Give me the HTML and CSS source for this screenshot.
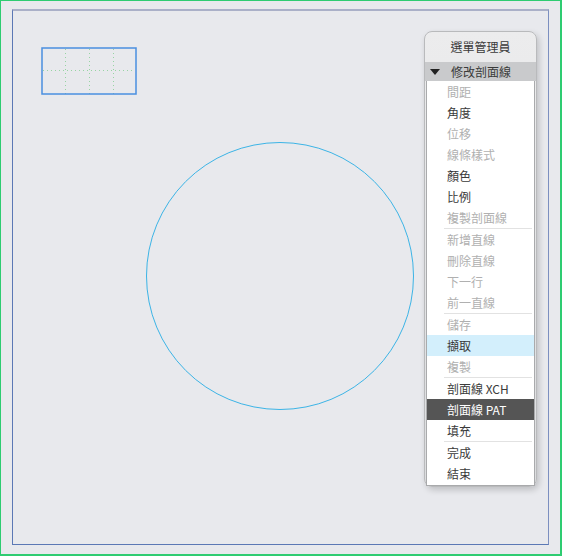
FILE: index.html
```html
<!DOCTYPE html>
<html>
<head>
<meta charset="utf-8">
<link rel="stylesheet" href="styles.css">
</head>
<body>
<div class="frame">
  <div class="canvas">
    <div class="grid-rect">
      <svg width="96" height="48" viewBox="0 0 96 48">
        <g stroke="#98d4a4" stroke-width="1" stroke-dasharray="1 3" fill="none">
          <line x1="24.5" y1="2" x2="24.5" y2="47"/>
          <line x1="48.5" y1="2" x2="48.5" y2="47"/>
          <line x1="72.5" y1="2" x2="72.5" y2="47"/>
          <line x1="2" y1="23.5" x2="94" y2="23.5"/>
        </g>
        <rect x="1" y="1" width="94" height="46" fill="none" stroke="#4a8fe0" stroke-width="1.5"/>
      </svg>
    </div>
    <div class="circle"></div>
    <div class="menu">
      <div class="menu-title">選單管理員</div>
      <div class="menu-head"><span class="tri"></span>修改剖面線</div>
      <ul class="menu-list">
        <li class="dis">間距</li>
        <li>角度</li>
        <li class="dis">位移</li>
        <li class="dis">線條樣式</li>
        <li>顏色</li>
        <li>比例</li>
        <li class="dis sep">複製剖面線</li>
        <li class="dis">新增直線</li>
        <li class="dis">刪除直線</li>
        <li class="dis">下一行</li>
        <li class="dis sep">前一直線</li>
        <li class="dis">儲存</li>
        <li class="hover">擷取</li>
        <li class="dis sep">複製</li>
        <li>剖面線 XCH</li>
        <li class="sel">剖面線 PAT</li>
        <li class="sep">填充</li>
        <li>完成</li>
        <li>結束</li>
      </ul>
    </div>
  </div>
</div>
</body>
</html>
```
FILE: styles.css
```css
html, body {
  margin: 0;
  padding: 0;
}
body {
  width: 562px;
  height: 556px;
  background: #e8e9ed;
  font-family: "Noto Sans CJK TC", "Noto Sans", sans-serif;
  overflow: hidden;
}
.frame {
  box-sizing: border-box;
  width: 562px;
  height: 556px;
  border-top: 1px solid #2ecc71;
  border-left: 1px solid #2ecc71;
  border-right: 2px solid #2ecc71;
  border-bottom: 2px solid #2ecc71;
  padding: 8px 12px 9px 11px;
  background: #e8e9ed;
}
.canvas {
  position: relative;
  box-sizing: border-box;
  width: 537px;
  height: 536px;
  border-top: 2px solid #aab0c8;
  border-left: 1px solid #5b78b5;
  border-right: 1px solid #7c8fc0;
  border-bottom: 1px solid #5b78b5;
}
.grid-rect {
  position: absolute;
  left: 28px;
  top: 36px;
  width: 96px;
  height: 48px;
}
.grid-rect svg {
  display: block;
}
.circle {
  position: absolute;
  left: 133px;
  top: 131px;
  width: 268px;
  height: 268px;
  box-sizing: border-box;
  border: 1px solid #3cb4e6;
  border-radius: 50%;
}
.menu {
  position: absolute;
  left: 411px;
  top: 20px;
  width: 113px;
  height: 456px;
  box-sizing: border-box;
  border: 1px solid #b9babc;
  border-radius: 8px;
  background: linear-gradient(#ececed, #dcdddf);
  box-shadow: 2px 3px 6px rgba(0,0,0,0.18);
  font-size: 12px;
  color: #3a3a3a;
}
.menu-title {
  height: 30px;
  line-height: 30px;
  text-align: center;
}
.menu-head {
  height: 19px;
  line-height: 19px;
  background: #c9cacc;
  padding-left: 5px;
  display: flex;
  align-items: center;
}
.tri {
  width: 0;
  height: 0;
  border-left: 5px solid transparent;
  border-right: 5px solid transparent;
  border-top: 6px solid #222;
  margin-right: 11px;
}
.menu-list {
  list-style: none;
  margin: 0 1px;
  padding: 0;
  background: #fff;
  border: 1px solid #a9aaac;
  border-top: none;
  height: 405px;
  box-sizing: border-box;
}
.menu-list li {
  height: 21px;
  line-height: 21px;
  padding-left: 20px;
  position: relative;
  color: #3a3a3a;
}
.menu-list li.dis {
  color: #b0b0b0;
}
.menu-list li.sep {
  margin-bottom: 1px;
}
.menu-list li.sep::after {
  content: "";
  position: absolute;
  left: 17px;
  right: 2px;
  bottom: -1px;
  height: 1px;
  background: #e2e2e2;
}
.menu-list li.hover {
  background: #d3effc;
}
.menu-list li.sel {
  background: #555555;
  color: #fff;
}
```
